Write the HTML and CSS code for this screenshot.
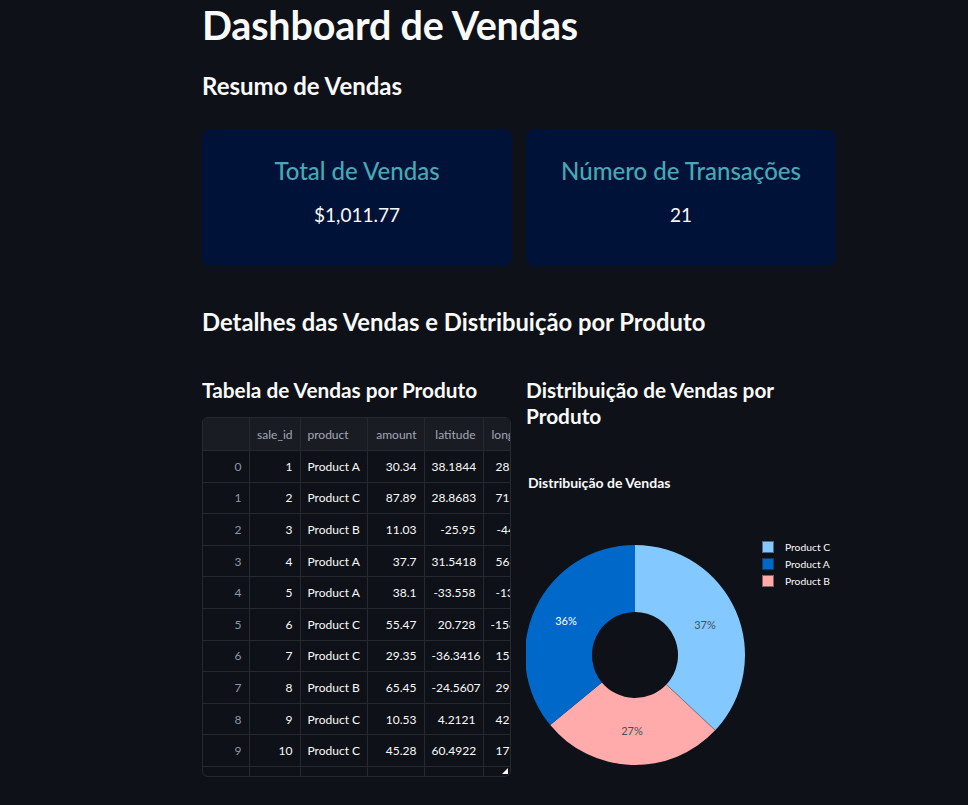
FILE: index.html
```html
<!DOCTYPE html>
<html lang="pt">
<head>
<meta charset="utf-8">
<title>Dashboard de Vendas</title>
<link rel="stylesheet" href="styles.css">
</head>
<body>
<main class="main">
  <h1 class="title">Dashboard de Vendas</h1>
  <h3 class="section">Resumo de Vendas</h3>
  <div class="cards">
    <div class="card">
      <div class="card-title">Total de Vendas</div>
      <div class="card-value">$1,011.77</div>
    </div>
    <div class="card">
      <div class="card-title">Número de Transações</div>
      <div class="card-value">21</div>
    </div>
  </div>
  <h3 class="section section-2">Detalhes das Vendas e Distribuição por Produto</h3>
  <div class="columns">
    <div class="col">
      <h4 class="sub">Tabela de Vendas por Produto</h4>
      <div class="table-wrap">
        <table class="df">
          <colgroup>
            <col class="c-idx"><col class="c-id"><col class="c-prod"><col class="c-amt"><col class="c-lat"><col class="c-lon">
          </colgroup>
          <thead>
            <tr><th></th><th>sale_id</th><th class="left">product</th><th>amount</th><th>latitude</th><th class="left lon">longitude</th></tr>
          </thead>
          <tbody>
            <tr><td class="idx">0</td><td>1</td><td class="left">Product A</td><td>30.34</td><td>38.1844</td><td class="left lon">28.4512</td></tr>
            <tr><td class="idx">1</td><td>2</td><td class="left">Product C</td><td>87.89</td><td>28.8683</td><td class="left lon">71.2203</td></tr>
            <tr><td class="idx">2</td><td>3</td><td class="left">Product B</td><td>11.03</td><td>-25.95</td><td class="left lon neg">-44.1212</td></tr>
            <tr><td class="idx">3</td><td>4</td><td class="left">Product A</td><td>37.7</td><td>31.5418</td><td class="left lon">56.3341</td></tr>
            <tr><td class="idx">4</td><td>5</td><td class="left">Product A</td><td>38.1</td><td>-33.558</td><td class="left lon">-13.9921</td></tr>
            <tr><td class="idx">5</td><td>6</td><td class="left">Product C</td><td>55.47</td><td>20.728</td><td class="left lon wide">-158.3021</td></tr>
            <tr><td class="idx">6</td><td>7</td><td class="left">Product C</td><td>29.35</td><td>-36.3416</td><td class="left lon">156.1134</td></tr>
            <tr><td class="idx">7</td><td>8</td><td class="left">Product B</td><td>65.45</td><td>-24.5607</td><td class="left lon">29.8812</td></tr>
            <tr><td class="idx">8</td><td>9</td><td class="left">Product C</td><td>10.53</td><td>4.2121</td><td class="left lon">42.5513</td></tr>
            <tr><td class="idx">9</td><td>10</td><td class="left">Product C</td><td>45.28</td><td>60.4922</td><td class="left lon">17.3301</td></tr>
            <tr><td class="idx">10</td><td>11</td><td class="left">Product B</td><td>71.02</td><td>12.3301</td><td class="left lon">88.1204</td></tr>
          </tbody>
        </table>
        <span class="resize"></span>
      </div>
    </div>
    <div class="col">
      <h4 class="sub">Distribuição de Vendas por Produto</h4>
      <div class="chart">
        <svg class="pie" width="309" height="320" viewBox="0 0 309 320" xmlns="http://www.w3.org/2000/svg">
          <text x="2" y="26" class="pie-title">Distribuição de Vendas</text>
          <path d="M109,83 A110,110 0 0 1 189.19,268.30 L140.35,222.43 A43,43 0 0 0 109,150 Z" fill="#83c9ff"/>
          <path d="M189.19,268.30 A110,110 0 0 1 24.24,263.11 L75.87,220.41 A43,43 0 0 0 140.35,222.43 Z" fill="#ffabab"/>
          <path d="M24.24,263.11 A110,110 0 0 1 109,83 L109,150 A43,43 0 0 0 75.87,220.41 Z" fill="#0068c9"/>
          <line x1="140.35" y1="222.43" x2="189.19" y2="268.30" stroke="#5a6270" stroke-width="0.6"/>
          <text x="179" y="167" class="pct dark" text-anchor="middle">37%</text>
          <text x="40" y="163" class="pct light" text-anchor="middle">36%</text>
          <text x="106" y="273" class="pct dark" text-anchor="middle">27%</text>
          <rect x="236.5" y="79.5" width="11" height="11" fill="#83c9ff" stroke="#4a6a88" stroke-width="1"/>
          <rect x="236.5" y="96.5" width="11" height="11" fill="#0068c9" stroke="#0a3c70" stroke-width="1"/>
          <rect x="236.5" y="113.5" width="11" height="11" fill="#ffabab" stroke="#8a5c60" stroke-width="1"/>
          <text x="259" y="88.5" class="leg">Product C</text>
          <text x="259" y="105.5" class="leg">Product A</text>
          <text x="259" y="122.5" class="leg">Product B</text>
        </svg>
      </div>
    </div>
  </div>
</main>
</body>
</html>
```

FILE: styles.css
```css
html, body {
  margin: 0;
  padding: 0;
  background: #0e1117;
}
body {
  font-family: "Lato", "Liberation Sans", sans-serif;
  color: #fafafa;
  width: 968px;
  height: 805px;
  overflow: hidden;
}
.main {
  width: 634px;
  margin-left: 202px;
}
.title {
  margin: 0;
  padding-top: 3px;
  font-size: 39.5px;
  line-height: 44px;
  font-weight: 700;
  letter-spacing: -0.2px;
}
.section {
  margin: 24px 0 0 0;
  font-size: 24px;
  line-height: 30px;
  font-weight: 700;
}
.section-2 {
  margin-top: 41px;
  font-size: 23.8px;
}
.cards {
  display: grid;
  grid-template-columns: 310px 310px;
  column-gap: 14px;
  margin-top: 28px;
}
.card {
  background: #011238;
  border-radius: 8px;
  height: 137px;
  display: flex;
  flex-direction: column;
  align-items: center;
  padding-top: 27px;
  box-sizing: border-box;
}
.card-title {
  color: #48a8b4;
  font-size: 24px;
  line-height: 30px;
  font-weight: 500;
}
.card-value {
  margin-top: 17px;
  font-size: 19px;
  line-height: 24px;
}
.columns {
  display: grid;
  grid-template-columns: 310px 310px;
  column-gap: 14px;
  margin-top: 40px;
}
.sub {
  margin: 0;
  font-size: 20.8px;
  line-height: 26px;
  font-weight: 700;
}
.table-wrap {
  position: relative;
  margin-top: 14px;
  width: 309px;
  height: 360px;
  box-sizing: border-box;
  border: 1px solid #262932;
  border-radius: 6px;
  overflow: hidden;
}
.df {
  border-collapse: collapse;
  table-layout: fixed;
  width: 360px;
  font-size: 12px;
}
.c-idx { width: 46px; }
.c-id { width: 51px; }
.c-prod { width: 67px; }
.c-amt { width: 57px; }
.c-lat { width: 59px; }
.c-lon { width: 80px; }
.df th, .df td {
  border-right: 1px solid #262932;
  border-bottom: 1px solid #262932;
  padding: 0 7px;
  text-align: right;
  white-space: nowrap;
  overflow: hidden;
}
.df th {
  height: 32px;
  background: #1a1c24;
  color: #a3a8b4;
  font-weight: 400;
}
.df td {
  height: 30.6px;
  color: #fafafa;
}
.df .left { text-align: left; }
.df .lon { padding-left: 8px; }
.df td.lon { padding-left: 12px; }
.df td.neg { padding-left: 13px; }
.df td.wide { padding-left: 7px; }
.df td.idx { color: #9097a3; }
.resize {
  position: absolute;
  right: 2px;
  bottom: 2px;
  width: 0;
  height: 0;
  border-left: 6px solid transparent;
  border-bottom: 6px solid #fafafa;
}
.chart {
  margin-top: 33px;
}
.pie {
  display: block;
}
.pie-title {
  font-family: "Lato", "Liberation Sans", sans-serif;
  font-size: 14px;
  font-weight: 700;
  fill: #fafafa;
}
.pct {
  font-family: "Lato", "Liberation Sans", sans-serif;
  font-size: 11px;
}
.pct.dark { fill: #4a4f5c; }
.pct.light { fill: #ffffff; }
.leg {
  font-family: "Lato", "Liberation Sans", sans-serif;
  font-size: 10.3px;
  fill: #fafafa;
}
```
